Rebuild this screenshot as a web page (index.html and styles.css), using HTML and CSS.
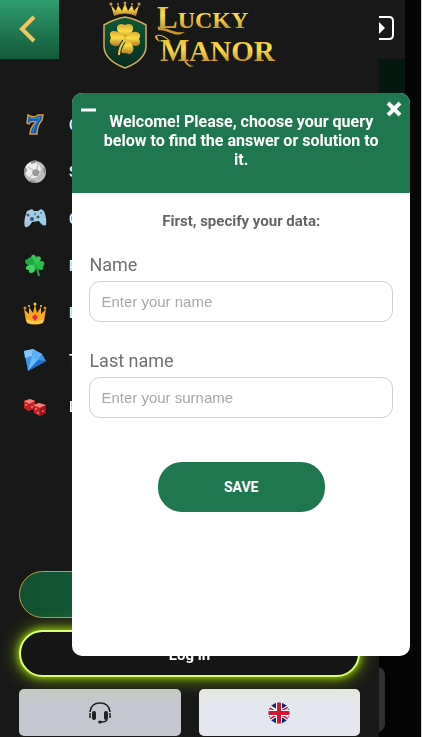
FILE: index.html
```html
<!DOCTYPE html>
<html lang="en">

<head>
    <meta charset="UTF-8">
    <meta name="viewport" content="width=device-width, initial-scale=1.0">
    <title>Lucky Manor</title>
    <link rel="stylesheet" href="styles.css">
</head>

<body>
    <!-- Page under the menu -->
    <div class="site">
        <header class="site-header">
            <svg class="enter-icon" width="30" height="24" viewBox="0 0 30 24">
                <path d="M8 1h17q4 0 4 4v14q0 4-4 4H8" fill="none" stroke="#fff" stroke-width="2" />
                <path d="M14 5l7 7-7 7z" fill="#fff" />
            </svg>
        </header>
        <div class="site-banner"></div>
        <div class="site-card"></div>
    </div>

    <!-- Side menu -->
    <aside class="sidebar">
        <div class="sidebar-top">
            <button type="button" class="back" aria-label="Back">
                <svg width="18" height="28" viewBox="0 0 18 28">
                    <path d="M15 2L3 14l12 12" fill="none" stroke="#f0c75e" stroke-width="4" />
                </svg>
            </button>
            <svg class="logo" width="174" height="70" viewBox="0 0 174 70">
                <defs>
                    <linearGradient id="gold" x1="0" y1="0" x2="0" y2="1">
                        <stop offset="0" stop-color="#d9a92c" />
                        <stop offset="0.45" stop-color="#fbdc45" />
                        <stop offset="1" stop-color="#b07a26" />
                    </linearGradient>
                    <linearGradient id="shield" x1="0" y1="0" x2="0" y2="1">
                        <stop offset="0" stop-color="#0e5a3a" />
                        <stop offset="1" stop-color="#082a20" />
                    </linearGradient>
                </defs>
                <g transform="translate(-2 0)">
                    <path d="M13 16L10 5l5 6 2-6 4 6 3-8 3 8 4-6 2 6 5-6-3 11q-11-5-22 0z" fill="url(#gold)" />
                    <circle cx="10" cy="4" r="1.5" fill="#c9974c" />
                    <circle cx="17" cy="4" r="1" fill="#c9974c" />
                    <circle cx="24" cy="3" r="1.5" fill="#c9974c" />
                    <circle cx="31" cy="4" r="1" fill="#c9974c" />
                    <circle cx="38" cy="4" r="1.5" fill="#c9974c" />
                    <path d="M24 17q11 2 21 8v21q0 14-21 22Q3 60 3 46V25q10-6 21-8z" fill="url(#shield)" stroke="#d3aa58" stroke-width="1.5" />
                    <g fill="url(#gold)">
                        <path d="M24 40q-9-8-8-13 2-5 8-2 6-3 8 2 1 5-8 13z" />
                        <path d="M25 39q-8 10-14 6-4-3-1-7-3-6 2-7 6-1 13 8z" />
                        <path d="M23 39q7-9 13-7 5 2 2 7 3 5-2 7-6 1-13-7z" />
                        <path d="M24 38q10 6 8 13-2 5-7 2-5 1-6-3 0-5 5-12z" />
                    </g>
                    <path d="M23 41q-5 7-5 14" fill="none" stroke="#0b3a29" stroke-width="4" />
                    <path d="M24 40q-6 7-6 15" fill="none" stroke="#f0c83d" stroke-width="2" />
                </g>
                <text x="54" y="28" class="logo-lucky" fill="url(#gold)"><tspan class="logo-cap">L</tspan>UCKY</text>
                <path d="M55 27q8 1 15 4 6 2 12 1-6 5-14 1-7-3-13-3z" fill="#c8942c" />
                <text x="57" y="61" class="logo-manor" fill="url(#gold)"><tspan class="logo-cap">M</tspan>ANOR</text>
                <path d="M66 41q-7-6-12-5 1 5 5 6-7-1-7-6 7-4 16 6z" fill="#e5b935" />
                <path d="M82 58q3 8 9 8-6 3-10-5z" fill="#c8942c" />
            </svg>
        </div>

        <nav class="menu">
            <a href="#" class="menu-item">
                <svg width="24" height="24" viewBox="0 0 24 24">
                    <path d="M5 2l2 1q5 2 8-1h5l-1 5q-5 6-5 14H7q0-6 6-12-3-1-6 0l-1 2-2-1z" fill="#1359b0" stroke="#d39a3c" stroke-width="1.5" />
                    <path d="M7 5q6 2 10-1-6 7-7 15" fill="none" stroke="#3794e0" stroke-width="1" />
                </svg>
                <span>Casino</span>
            </a>
            <a href="#" class="menu-item">
                <svg width="24" height="24" viewBox="0 0 24 24">
                    <circle cx="12" cy="12" r="11" fill="#bdbdbd" />
                    <circle cx="10" cy="10" r="8" fill="#ededed" />
                    <path d="M10 10l4-1 3 3-2 4-4 0-2-3z" fill="#9a9a9a" />
                    <path d="M8 1l6-1-2 3-4 1zM1 9l2-2 1 4-3 3zM22 7l-2 2 1 5 2-2zM7 20l5 1 1 2-6-1z" fill="#8d8d8d" />
                    <path d="M10 10L5 7M14 9l1-5M17 12l4-1M15 16l2 5M10 14l-4 4" stroke="#b5b5b5" />
                </svg>
                <span>Sport</span>
            </a>
            <a href="#" class="menu-item">
                <svg width="24" height="24" viewBox="0 0 24 24">
                    <path d="M4 4l5-2 2 2h4l3-2 3 2q3 8 2 14-3 2-7-4l-7 1q-3 6-7 5-2-6 2-16z" fill="#9fcbe3" />
                    <path d="M4 5l5-1-5 9-1 5q-1-6 1-13z" fill="#c4c6ef" />
                    <circle cx="5" cy="8" r="1.5" fill="#405673" />
                    <circle cx="9" cy="12" r="2" fill="#405673" />
                    <circle cx="15" cy="10" r="1.5" fill="#405673" />
                    <circle cx="18" cy="6" r="1" fill="#48799c" />
                    <circle cx="12" cy="7" r="1" fill="#48799c" />
                </svg>
                <span>Casual</span>
            </a>
            <a href="#" class="menu-item">
                <svg width="24" height="24" viewBox="0 0 24 24">
                    <path d="M12 12q-6-8-3-11 3-1 4 2 4-2 5 1 0 4-6 8z" fill="#35c755" />
                    <path d="M12 12q-9 0-10-4 0-3 3-3 1-3 4-1 3 2 3 8z" fill="#21a844" />
                    <path d="M11 11q7-6 10-3 1 3-1 4 1 4-2 4-4 0-7-5z" fill="#2bbb4d" />
                    <path d="M13 11q0 8-5 8-3 0-2-3-4 0-3-3 2-3 10-2z" fill="#3fd162" />
                    <path d="M12 11q3 5 4 11" fill="none" stroke="#27a545" stroke-width="2" />
                </svg>
                <span>Promo</span>
            </a>
            <a href="#" class="menu-item">
                <svg width="24" height="24" viewBox="0 0 24 24">
                    <path d="M3 20L1 8l5 5V6l4 6 2-9 2 9 4-6v7l5-5-2 12q-9 5-18 0z" fill="#f5a91c" />
                    <path d="M3 18q9 4 18 0l-1 4q-8 3-16 0z" fill="#ffc94a" />
                    <circle cx="12" cy="3" r="1.5" fill="#ffc94a" />
                    <circle cx="2" cy="7" r="1.5" fill="#e28d1c" />
                    <circle cx="22" cy="7" r="1.5" fill="#e28d1c" />
                    <circle cx="6" cy="5" r="1" fill="#ffc94a" />
                    <circle cx="18" cy="5" r="1" fill="#ffc94a" />
                    <path d="M12 13l3 3-3 4-3-4z" fill="#e52c4f" />
                </svg>
                <span>Loyalty</span>
            </a>
            <a href="#" class="menu-item">
                <svg width="24" height="24" viewBox="0 0 24 24">
                    <path d="M1 3l9-2 9 5 4 7L5 23z" fill="#3d94e5" />
                    <path d="M1 3l9-2-1 7-7 2z" fill="#83c8fb" />
                    <path d="M10 1l9 5-4 6-6-4z" fill="#5db2f6" />
                    <path d="M9 8l6 4L5 23z" fill="#68bbfa" />
                    <path d="M15 12l8 1L5 23z" fill="#1e70cb" />
                </svg>
                <span>Top</span>
            </a>
            <a href="#" class="menu-item">
                <svg width="24" height="24" viewBox="0 0 24 24">
                    <path d="M1 6l6-2 5 2v8l-7 2-4-3z" fill="#c81f25" />
                    <path d="M1 6l6-2 5 2-6 3z" fill="#f27f78" />
                    <path d="M10 10l6-2 7 2v8l-6 3-6-3z" fill="#c81f25" />
                    <path d="M10 10l6-2 7 2-6 3z" fill="#f27f78" />
                    <path d="M17 13v8l6-3v-8z" fill="#a3121a" />
                    <g fill="#f6c6c6">
                        <circle cx="3" cy="10" r="0.8" />
                        <circle cx="9" cy="12" r="0.8" />
                        <circle cx="13" cy="14" r="0.8" />
                        <circle cx="15" cy="18" r="0.8" />
                        <circle cx="20" cy="16" r="0.8" />
                    </g>
                </svg>
                <span>Lottery</span>
            </a>
        </nav>

        <div class="actions">
            <button type="button" class="pill pill-green">Sign up</button>
            <button type="button" class="pill pill-neon">Log in</button>
            <div class="tiles">
                <button type="button" class="tile tile-support" aria-label="Support">
                    <svg width="22" height="22" viewBox="0 0 22 22">
                        <path d="M1 10Q2 1 11 1t10 9" fill="none" stroke="#222" stroke-width="1.5" />
                        <rect x="3" y="9" width="4" height="9" rx="2" fill="#222" />
                        <rect x="15" y="9" width="4" height="9" rx="2" fill="#222" />
                        <path d="M1 11v5M21 11v5M18 17q0 3-6 3" fill="none" stroke="#222" stroke-width="1.5" />
                        <ellipse cx="11" cy="20" rx="2" ry="1.5" fill="#222" />
                    </svg>
                </button>
                <button type="button" class="tile tile-lang" aria-label="English">
                    <svg width="22" height="22" viewBox="0 0 22 22">
                        <clipPath id="round">
                            <circle cx="11" cy="11" r="10.5" />
                        </clipPath>
                        <g clip-path="url(#round)">
                            <rect width="22" height="22" fill="#0b2a78" />
                            <path d="M0 4l22 14M22 4L0 18" stroke="#fff" stroke-width="4" />
                            <path d="M0 5l10 6M22 18L12 12M22 4L12 10M0 18l10-6" stroke="#d01733" stroke-width="1.5" />
                            <path d="M11 0v22M0 11h22" stroke="#fff" stroke-width="6" />
                            <path d="M11 0v22M0 11h22" stroke="#d01733" stroke-width="4" />
                        </g>
                    </svg>
                </button>
            </div>
        </div>
    </aside>

    <!-- Chat window -->
    <section class="chat">
        <header class="chat-header">
            <button type="button" class="chat-btn chat-min" aria-label="Minimize">
                <svg width="16" height="4" viewBox="0 0 16 4">
                    <path d="M1 2h15" stroke="#fff" stroke-width="3" />
                </svg>
            </button>
            <p class="chat-title">Welcome! Please, choose your query below to find the answer or solution to it.</p>
            <button type="button" class="chat-btn chat-close" aria-label="Close">
                <svg width="16" height="16" viewBox="0 0 16 16">
                    <path d="M2 2l12 12M14 2L2 14" stroke="#fff" stroke-width="4" />
                </svg>
            </button>
        </header>
        <form class="chat-form">
            <p class="chat-hint">First, specify your data:</p>
            <div class="field">
                <label for="name">Name</label>
                <input type="text" id="name" name="name" placeholder="Enter your name">
            </div>
            <div class="field">
                <label for="surname">Last name</label>
                <input type="text" id="surname" name="surname" placeholder="Enter your surname">
            </div>
            <button type="button" class="save">SAVE</button>
        </form>
    </section>
</body>

</html>
```

FILE: styles.css
```css
* {
    box-sizing: border-box;
}

body {
    margin: 0;
    background-color: #050505;
    font-family: Roboto, Arial, sans-serif;
    overflow: hidden;
}

button {
    padding: 0;
    border: none;
    font-family: inherit;
    cursor: pointer;
}

p {
    margin: 0;
}

/* Page under the menu */
.site {
    display: flex;
    flex-direction: column;
    height: 100vh;
    border-right: 1px solid #d8d8d8;
    padding-right: 16px;
}

.site-header {
    display: flex;
    justify-content: flex-end;
    align-items: center;
    height: 59px;
    padding: 0 11px 4px 0;
    background-color: #191919;
}

.site-banner {
    height: 240px;
    background-color: #04180f;
}

.site-card {
    height: 65px;
    margin: auto 20px 5px 0;
    border-radius: 8px;
    background-color: #303030;
}

/* Side menu */
.sidebar {
    position: fixed;
    top: 0;
    bottom: 0;
    left: 0;
    right: 43px;
    display: flex;
    flex-direction: column;
    background-color: #181818;
}

.sidebar-top {
    display: grid;
    grid-template-columns: 59px 1fr 59px;
    justify-items: center;
    align-items: start;
    height: 70px;
}

.back {
    display: flex;
    align-items: center;
    justify-content: center;
    width: 59px;
    height: 59px;
    padding: 0 4px 2px 0;
    background: linear-gradient(#2f9c6e, #13593a);
}

.logo-lucky,
.logo-manor {
    font-family: "Liberation Serif", serif;
    font-weight: bold;
}

.logo-lucky {
    font-size: 24px;
}

.logo-manor {
    font-size: 29px;
}

.logo-cap {
    font-size: 31px;
}

.menu {
    padding: 31px 23px 0;
}

.menu-item {
    display: flex;
    align-items: center;
    gap: 22px;
    height: 47px;
    color: #fff;
    font-size: 14px;
    font-weight: 500;
    text-decoration: none;
}

.actions {
    display: flex;
    flex-direction: column;
    gap: 12px;
    margin-top: auto;
    padding: 0 19px 1px;
}

.pill {
    height: 47px;
    border-radius: 24px;
    color: #fff;
    font-size: 15px;
    font-weight: bold;
}

.pill-green {
    border: 1px solid #b7a148;
    background: linear-gradient(90deg, #11502f, #1f8058);
}

.pill-neon {
    padding-top: 3px;
    border: 2px solid #d8ff7a;
    background-color: #161616;
    box-shadow: 0 0 6px 1px #8fc00a, 0 0 18px 2px #6c940c;
}

.tiles {
    display: flex;
    gap: 18px;
}

.tile {
    display: flex;
    flex: 1;
    align-items: center;
    justify-content: center;
    height: 47px;
    border-radius: 5px;
}

.tile-support {
    background: linear-gradient(#c4cac2, #c4c6d0 16px);
}

.tile-lang {
    background: linear-gradient(#e4e8dc, #e5e7f0 16px);
}

/* Chat window */
.chat {
    position: fixed;
    top: 93px;
    right: 12px;
    bottom: 81px;
    width: 80%;
    border-radius: 10px;
    background-color: #fff;
    overflow: hidden;
}

.chat-header {
    display: flex;
    align-items: flex-start;
    justify-content: space-between;
    height: 100px;
    padding: 8px;
    background-color: #1f774f;
}

.chat-btn {
    display: flex;
    background: none;
}

.chat-min {
    padding-top: 7px;
}

.chat-title {
    flex: 1;
    padding-top: 11px;
    color: #fff;
    font-size: 16px;
    font-weight: bold;
    line-height: 19px;
    text-align: center;
}

.chat-form {
    display: flex;
    flex-direction: column;
    padding: 18px 17px 0;
}

.chat-hint {
    margin-bottom: 24px;
    color: #666;
    font-size: 15px;
    font-weight: bold;
    line-height: 20px;
    text-align: center;
}

.field {
    display: flex;
    flex-direction: column;
    gap: 6px;
    margin-bottom: 29px;
}

.field label {
    color: #707070;
    font-size: 18px;
    line-height: 20px;
}

.field input {
    height: 41px;
    padding: 0 11px;
    border: 1px solid #d0d0d0;
    border-radius: 11px;
    font-family: "Liberation Sans", Arial, sans-serif;
    font-size: 15px;
}

.field input::placeholder {
    color: #a8a8a8;
}

.save {
    align-self: center;
    width: 167px;
    height: 50px;
    margin-top: 15px;
    border-radius: 24px;
    background-color: #1f774f;
    color: #fff;
    font-size: 14px;
    font-weight: bold;
}
```
